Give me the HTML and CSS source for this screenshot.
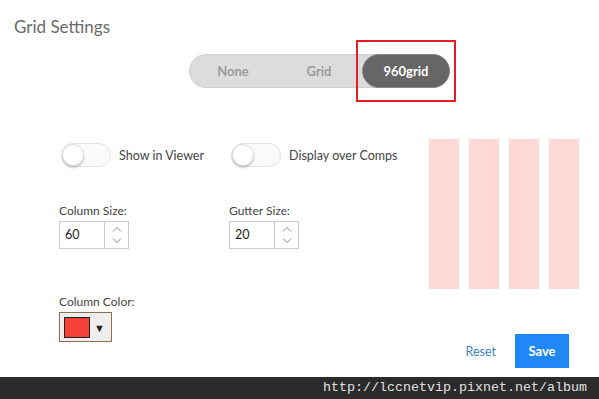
FILE: index.html
```html
<!DOCTYPE html>
<html>
<head>
<meta charset="utf-8">
<link rel="stylesheet" href="styles.css">
</head>
<body>
<div class="page">
  <div class="dialog">
    <h1 class="title">Grid Settings</h1>
    <div class="seg-row">
      <div class="seg">
        <span class="seg-item">None</span>
        <span class="seg-item">Grid</span>
        <span class="seg-item active">960grid</span>
      </div>
    </div>
    <div class="main">
      <div class="controls">
        <div class="row toggles">
          <label class="toggle-field"><span class="toggle"><span class="knob"></span></span><span class="toggle-label">Show in Viewer</span></label>
          <label class="toggle-field"><span class="toggle"><span class="knob"></span></span><span class="toggle-label">Display over Comps</span></label>
        </div>
        <div class="row sizes">
          <div class="field">
            <div class="field-label">Column Size:</div>
            <div class="num">
              <span class="num-value">60</span>
              <span class="spin">
                <svg width="10" height="22" viewBox="0 0 10 22"><path d="M1 7.5 L5 3.5 L9 7.5" fill="none" stroke="#888" stroke-width="1"/><path d="M1 14.5 L5 18.5 L9 14.5" fill="none" stroke="#888" stroke-width="1"/></svg>
              </span>
            </div>
          </div>
          <div class="field">
            <div class="field-label">Gutter Size:</div>
            <div class="num">
              <span class="num-value">20</span>
              <span class="spin">
                <svg width="10" height="22" viewBox="0 0 10 22"><path d="M1 7.5 L5 3.5 L9 7.5" fill="none" stroke="#888" stroke-width="1"/><path d="M1 14.5 L5 18.5 L9 14.5" fill="none" stroke="#888" stroke-width="1"/></svg>
              </span>
            </div>
          </div>
        </div>
      </div>
      <div class="preview">
        <span class="col"></span><span class="col"></span><span class="col"></span><span class="col"></span>
      </div>
    </div>
    <div class="bottom">
      <div class="field color-field">
        <div class="field-label">Column Color:</div>
        <div class="color-btn"><span class="swatch"></span><span class="arrow">▼</span></div>
      </div>
      <div class="footer">
        <span class="reset">Reset</span>
        <span class="save">Save</span>
      </div>
    </div>
  </div>
  <div class="bar">http://lccnetvip.pixnet.net/album</div>
  <div class="highlight"></div>
</div>
</body>
</html>
```

FILE: styles.css
```css
* { box-sizing: border-box; }
html, body { margin: 0; padding: 0; background: #fff; }
body { font-family: Lato, "Noto Sans", sans-serif; color: #444; }
.page { position: relative; width: 599px; height: 399px; overflow: hidden; display: flex; flex-direction: column; }
.dialog { flex: 1; display: flex; flex-direction: column; }
.title { margin: 15px 0 0 14px; font-size: 17px; line-height: 24px; font-weight: 400; color: #6a6a6a; }
.seg-row { margin-top: 15px; padding-left: 189px; }
.seg { display: flex; width: 261px; height: 34px; border-radius: 17px; background: #dcdcdc; border: 1px solid #cfcfcf; }
.seg-item { flex: 1; display: flex; align-items: center; justify-content: center; font-size: 13px; font-weight: 700; color: #9a9a9a; border-radius: 17px; }
.seg-item.active { background: #666; color: #fff; margin: -1px -1px -1px 0; border: 1px solid #888; }
.main { display: flex; margin-top: 51px; padding-left: 59px; }
.controls { width: 370px; }
.row { display: flex; }
.toggles { margin-top: 4px; }
.toggle-field { width: 170px; display: flex; align-items: center; padding-left: 2px; }
.toggle { position: relative; width: 50px; height: 24px; border-radius: 12px; border: 1px solid #e3e3e3; background: #fafafa; }
.knob { position: absolute; left: 0; top: 0; width: 22px; height: 22px; border-radius: 50%; background: #fff; border: 1px solid #dcdcdc; box-shadow: 0 2px 2px rgba(0,0,0,0.18); }
.toggle-label { margin-left: 8px; font-size: 12.5px; color: #444; }
.sizes { margin-top: 36px; }
.field { width: 170px; }
.field-label { font-size: 12px; line-height: 16px; color: #444; margin-bottom: 2px; }
.num { display: flex; width: 70px; height: 28px; border: 1px solid #ccc; background: #fff; }
.num-value { width: 45px; border-right: 1px solid #ccc; font-size: 12.5px; line-height: 26px; padding-left: 5px; color: #222; }
.spin { flex: 1; display: flex; align-items: center; justify-content: center; }
.preview { display: flex; gap: 10px; }
.col { width: 30px; height: 150px; background: #fdd8d6; }
.bottom { display: flex; align-items: flex-start; margin-top: 5px; padding-left: 59px; padding-right: 30px; }
.color-btn { display: flex; align-items: center; width: 53px; height: 30px; border: 1px solid #8d6e4e; background: #eee; }
.swatch { width: 26px; height: 21px; margin-left: 4px; background: #f44336; border: 1px solid #222; }
.arrow { margin-left: 4px; font-size: 11px; color: #222; }
.footer { margin-left: auto; margin-top: 40px; display: flex; align-items: center; }
.reset { font-size: 12.5px; color: #3c7fc3; margin-right: 19px; }
.save { width: 54px; height: 34px; background: #1f88f6; color: #fff; font-weight: 700; font-size: 13px; display: flex; align-items: center; justify-content: center; }
.bar { height: 22px; background: #2b2b2b; color: #e0e0e0; font-family: "Liberation Mono", monospace; font-size: 13.33px; line-height: 22px; text-align: right; padding-right: 12px; }
.highlight { position: absolute; left: 356px; top: 40px; width: 100px; height: 62px; border: 2px solid #e81c24; }
```
